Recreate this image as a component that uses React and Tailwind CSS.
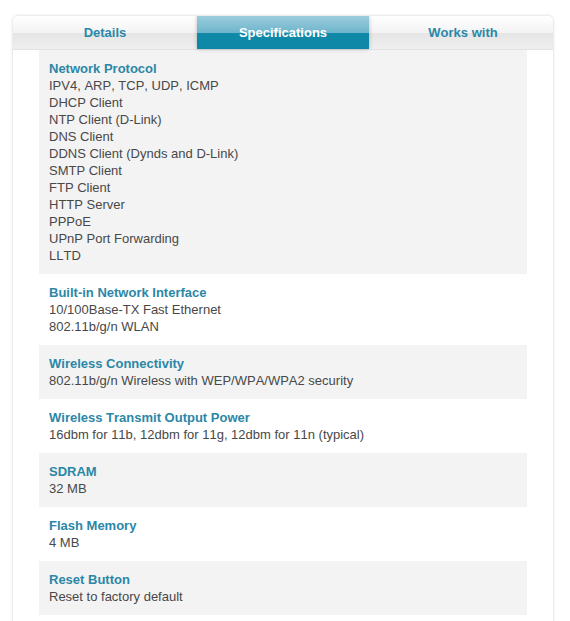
import React from "react";

const sections = [
  {
    title: "Network Protocol",
    lines: [
      "IPV4, ARP, TCP, UDP, ICMP",
      "DHCP Client",
      "NTP Client (D-Link)",
      "DNS Client",
      "DDNS Client (Dynds and D-Link)",
      "SMTP Client",
      "FTP Client",
      "HTTP Server",
      "PPPoE",
      "UPnP Port Forwarding",
      "LLTD",
    ],
  },
  { title: "Built-in Network Interface", lines: ["10/100Base-TX Fast Ethernet", "802.11b/g/n WLAN"] },
  { title: "Wireless Connectivity", lines: ["802.11b/g/n Wireless with WEP/WPA/WPA2 security"] },
  { title: "Wireless Transmit Output Power", lines: ["16dbm for 11b, 12dbm for 11g, 12dbm for 11n (typical)"] },
  { title: "SDRAM", lines: ["32 MB"] },
  { title: "Flash Memory", lines: ["4 MB"] },
  { title: "Reset Button", lines: ["Reset to factory default"] },
];

function Tab({ label, active, className = "" }) {
  if (active) {
    return (
      <div className={"relative flex h-full items-center justify-center shadow-[0_0_4px_rgba(0,0,0,0.25)] z-10 " + className}>
        <div className="absolute inset-0 flex flex-col">
          <div className="h-[17px] bg-gradient-to-b from-[#9ccddd] to-[#6db4cb]" />
          <div className="flex-1 bg-gradient-to-b from-[#1189a8] to-[#0d87a6]" />
        </div>
        <span className="relative pt-[1px] text-[13px] font-bold text-white">{label}</span>
      </div>
    );
  }
  return (
    <div className={"relative flex h-full items-center justify-center " + className}>
      <div className="absolute inset-0 flex flex-col">
        <div className="h-[17px] bg-gradient-to-b from-[#ffffff] to-[#f3f3f3]" />
        <div className="flex-1 bg-gradient-to-b from-[#e5e5e5] to-[#efefef]" />
      </div>
      <span className="relative pt-[1px] text-[13px] font-bold text-[#2b87a7]">{label}</span>
    </div>
  );
}

export default function App() {
  return (
    <div className="min-h-[621px] bg-white pt-4 px-[13px] font-['Liberation_Sans',Arial,sans-serif] [font-kerning:none]">
      <div className="w-[540px] rounded-t-[5px] bg-white shadow-[0_0_3px_rgba(0,0,0,0.22)] overflow-hidden">
        <div className="flex h-[34px] border-b border-[#e2e2e2]">
          <Tab label="Details" className="w-[184px]" />
          <Tab label="Specifications" active className="w-[172px]" />
          <Tab label="Works with" className="flex-1 pl-[4px]" />
        </div>
        <div className="px-[26px] pb-[10px]">
          {sections.map((s, i) => (
            <div
              key={s.title}
              className={
                "pl-[10px] pr-2 pt-[10px] pb-[10px] text-[13px] leading-[17px] " +
                (i % 2 === 0 ? "bg-[#f3f3f3]" : "bg-white")
              }
            >
              <div className="font-bold text-[#2b87a7]">{s.title}</div>
              {s.lines.map((l) => (
                <div key={l} className="text-[#484848]">
                  {l}
                </div>
              ))}
            </div>
          ))}
        </div>
      </div>
    </div>
  );
}
